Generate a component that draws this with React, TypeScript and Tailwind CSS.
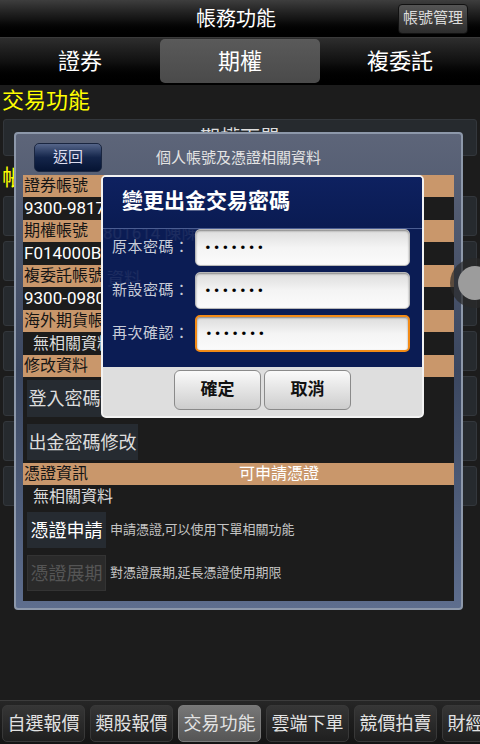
import React from "react";

const bottomTabs = ["自選報價", "類股報價", "交易功能", "雲端下單", "競價拍賣", "財經資訊"];

function OrangeRow({ children }: { children: React.ReactNode }) {
  return <div className="h-[22px] bg-[#c9976b] pl-[1px] text-[16px] leading-[22px] text-[#151515]">{children}</div>;
}

function ValueRow({ children }: { children: React.ReactNode }) {
  return <div className="h-[23px] whitespace-nowrap pl-[1px] text-[17px] leading-[23px] text-white">{children}</div>;
}

function PwdRow({ label, focus }: { label: string; focus?: boolean }) {
  return (
    <div className="flex h-[37px] items-center">
      <div className="w-[92px] whitespace-nowrap pl-[9px] text-[15px] tracking-[0.5px] text-[#c8ccd8]">{label}：</div>
      <div
        className={
          "flex h-[37px] w-[215px] items-center rounded-[5px] bg-gradient-to-b from-[#dcdcdc] via-[#f4f4f4] to-[#fbfbfb] pl-[9px] shadow-[inset_0_1px_2px_rgba(0,0,0,0.4)] " +
          (focus ? "border-2 border-[#f28a16]" : "border border-[#b8b8b8]")
        }
      >
        <span className="text-[17px] leading-none tracking-[3px] text-black">•••••••</span>
      </div>
    </div>
  );
}

export default function App() {
  return (
    <div className="relative flex h-[744px] w-[480px] flex-col overflow-hidden bg-[#1c1c1c] font-['Roboto','Noto_Sans_CJK_TC',sans-serif]">
      {/* top bar */}
      <div className="flex h-[37px] items-center bg-gradient-to-b from-[#3e3e3e] via-[#151515] to-black">
        <div className="flex-1 pl-[74px] text-center text-[20px] text-white">帳務功能</div>
        <button className="mr-[12px] h-[30px] w-[70px] rounded-[4px] border border-[#111] bg-gradient-to-b from-[#555] to-[#2c2c2c] text-[15px] text-[#ddd]">帳號管理</button>
      </div>
      <div className="h-px bg-[#3a3a3a]" />
      <div className="grid h-[47px] grid-cols-3 bg-gradient-to-b from-[#2e2e2e] via-[#111] to-black">
        <div className="flex items-center justify-center text-[22px] text-white">證券</div>
        <div className="mt-[1px] mb-[2px] flex items-center justify-center rounded-[5px] bg-gradient-to-b from-[#5a5a5a] to-[#4a4a4a] text-[22px] text-white">期權</div>
        <div className="flex items-center justify-center text-[22px] text-white">複委託</div>
      </div>
      <div className="h-[32px] pl-[2px] text-[22px] leading-[32px] text-[#ffff00]">交易功能</div>
      <div className="mx-[3px] mt-[2px] flex h-[37px] items-start justify-center overflow-hidden rounded-[3px] border border-[#33373c] bg-[#262a2e] pt-[3px] text-[20px] text-[#ddd]">期權下單</div>
      <div className="mt-[4px] h-[36px] pl-[2px] text-[22px] leading-[36px] text-[#ffff00]">帳務查詢</div>
      <div className="flex flex-col gap-[5px] px-[3px]">
        {[0, 1, 2, 3, 4, 5, 6].map((i) => (
          <div key={i} className="h-[40px] rounded-[3px] border border-[#33373c] bg-[#262a2e]" />
        ))}
      </div>
      <div className="flex-1" />
      {/* bottom tabs */}
      <div className="h-[44px] border-t border-[#3c3c3c] bg-gradient-to-b from-[#262626] to-[#141414] pt-[4px]">
        <div className="flex gap-[5px] pl-[2px]">
          {bottomTabs.map((t) => (
            <div
              key={t}
              className={
                "flex h-[37px] w-[83px] shrink-0 items-center justify-center rounded-[5px] border text-[18px] text-[#e2e2e2] " +
                (t === "交易功能" ? "border-[#7a7a7a] bg-gradient-to-b from-[#777] to-[#555]" : "border-[#383838] bg-gradient-to-b from-[#363636] to-[#1f1f1f]")
              }
            >
              {t}
            </div>
          ))}
        </div>
      </div>

      {/* account dialog */}
      <div className="absolute left-[14px] top-[132px] flex h-[478px] w-[449px] flex-col rounded-[4px] border-2 border-[#8d98aa] bg-gradient-to-b from-[#5d6579] via-[#3b4760] to-[#5e6e8e]">
        <div className="grid h-[41px] grid-cols-[1fr_auto_1fr] items-start">
          <div className="pl-[18px] pt-[9px]">
            <button className="h-[29px] w-[68px] rounded-[5px] border border-[#1a2640] bg-gradient-to-b from-[#56668a] via-[#14254a] to-[#061433] text-[15px] text-[#dde]">返回</button>
          </div>
          <div className="pt-[13px] text-[15px] text-[#e4e4e4]">個人帳號及憑證相關資料</div>
          <div />
        </div>
        <div className="mx-[7px] mb-[7px] flex flex-1 flex-col overflow-hidden bg-[#1c1c1c]">
          <OrangeRow>證券帳號</OrangeRow>
          <ValueRow>9300-98170801-9809285 陳陳陳陳</ValueRow>
          <OrangeRow>期權帳號</OrangeRow>
          <ValueRow>F014000B0801614 陳陳陳陳</ValueRow>
          <OrangeRow>複委託帳號</OrangeRow>
          <ValueRow>9300-0980801 陳陳陳陳</ValueRow>
          <OrangeRow>海外期貨帳號</OrangeRow>
          <div className="h-[23px] pl-[10px] text-[16px] leading-[23px] text-[#ddd]">無相關資料</div>
          <OrangeRow>修改資料</OrangeRow>
          <div className="ml-[4px] mt-[3px] flex h-[37px] w-[111px] items-center justify-center bg-[#262b31] text-[18px] text-[#ddd]">登入密碼修改</div>
          <div className="ml-[4px] mt-[7px] flex h-[36px] w-[111px] items-center justify-center bg-[#262b31] text-[18px] text-[#ddd]">出金密碼修改</div>
          <div className="mt-[3px] flex h-[22px] bg-[#c9976b] text-[16px] leading-[22px]">
            <span className="w-[216px] pl-[1px] text-[#151515]">憑證資訊</span>
            <span className="text-white">可申請憑證</span>
          </div>
          <div className="h-[24px] pl-[10px] text-[16px] leading-[24px] text-[#ddd]">無相關資料</div>
          <div className="ml-[4px] mt-[3px] flex items-center gap-[4px]">
            <div className="flex h-[36px] w-[79px] items-center justify-center bg-[#262b31] text-[18px] text-white">憑證申請</div>
            <span className="text-[13px] text-[#c4c4c4]">申請憑證,可以使用下單相關功能</span>
          </div>
          <div className="ml-[4px] mt-[7px] flex items-center gap-[4px]">
            <div className="flex h-[36px] w-[79px] items-center justify-center border border-[#333] bg-[#2a2a2a] text-[18px] text-[#555]">憑證展期</div>
            <span className="text-[13px] text-[#c4c4c4]">對憑證展期,延長憑證使用期限</span>
          </div>
        </div>
      </div>

      {/* password modal */}
      <div className="absolute left-[101px] top-[175px] flex h-[243px] w-[323px] flex-col overflow-hidden rounded-[5px] border-2 border-[#f2f2f2] bg-[#dedede]">
        <div className="relative flex h-[190px] flex-col bg-[#0b1c54]">
          <div className="pointer-events-none absolute inset-0 text-[17px] text-white/[0.07]">
            <div className="absolute left-0 top-[0px] whitespace-nowrap">0801-9809285 陳陳陳陳</div>
            <div className="absolute left-0 top-[44px] whitespace-nowrap">801614 陳陳陳陳</div>
            <div className="absolute left-[4px] top-[90px] whitespace-nowrap">資料</div>
          </div>
          <div className="relative h-[52px] border-b border-[#4b5d92] bg-gradient-to-b from-[#0e2160] to-[#0a1b52] pl-[19px] pt-[9px] text-[21px] font-bold text-white">變更出金交易密碼</div>
          <div className="relative flex flex-col gap-[6px]">
            <PwdRow label="原本密碼" />
            <PwdRow label="新設密碼" />
            <PwdRow label="再次確認" focus />
          </div>
        </div>
        <div className="flex flex-1 items-start justify-center gap-[3px] pt-[3px]">
          <button className="h-[40px] w-[87px] rounded-[6px] border border-[#8a8a8a] bg-gradient-to-b from-[#fafafa] to-[#cdcdcd] text-[17px] font-bold text-[#111]">確定</button>
          <button className="h-[40px] w-[87px] rounded-[6px] border border-[#8a8a8a] bg-gradient-to-b from-[#fafafa] to-[#cdcdcd] text-[17px] font-bold text-[#111]">取消</button>
        </div>
      </div>

      {/* floating assist button */}
      <div className="absolute left-[450px] top-[258px] flex h-[50px] w-[50px] items-center justify-center rounded-full bg-[#2a2a2a]/70">
        <div className="h-[34px] w-[34px] rounded-full bg-[#9c9c9c]" />
      </div>
    </div>
  );
}
